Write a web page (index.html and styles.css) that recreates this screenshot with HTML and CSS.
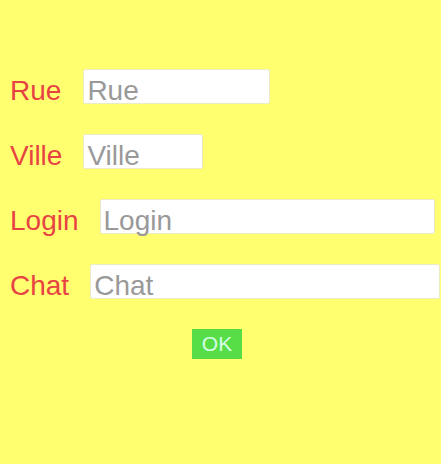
FILE: index.html
```html
<!DOCTYPE html>
<html lang="fr">
<head>
<meta charset="utf-8">
<title>Formulaire</title>
<link rel="stylesheet" href="styles.css">
</head>
<body>
<form class="form">
  <div class="row"><label class="label" for="rue">Rue</label><div class="box box-rue"><input class="field" id="rue" placeholder="Rue"></div></div>
  <div class="row"><label class="label" for="ville">Ville</label><div class="box box-ville"><input class="field" id="ville" placeholder="Ville"></div></div>
  <div class="row"><label class="label" for="login">Login</label><div class="box box-login"><input class="field" id="login" placeholder="Login"></div></div>
  <div class="row"><label class="label" for="chat">Chat</label><div class="box box-chat"><input class="field" id="chat" placeholder="Chat"></div></div>
  <div class="actions"><button class="ok" type="button">OK</button></div>
</form>
</body>
</html>
```
FILE: styles.css
```css
html, body {
  margin: 0;
  padding: 0;
  background: #ffff6f;
  width: 441px;
  height: 464px;
  overflow: hidden;
}
.form {
  display: flex;
  flex-direction: column;
  gap: 30px;
  padding: 69px 0 0 10px;
  font-family: "Liberation Sans", Arial, sans-serif;
}
.row {
  display: flex;
  align-items: center;
  height: 35px;
  gap: 22px;
}
.label {
  font-size: 28px;
  color: #e84343;
  line-height: 35px;
  padding-top: 8px;
}
.box {
  box-sizing: border-box;
  height: 35px;
  border: 1px solid #ecebc8;
  border-radius: 2px;
  background: #fff;
  overflow: visible;
}
.field {
  display: block;
  box-sizing: border-box;
  width: 100%;
  height: 41px;
  margin: 0;
  padding: 0 0 0 3px;
  border: 0;
  background: transparent;
  font-family: "Liberation Sans", Arial, sans-serif;
  font-size: 28px;
  color: #555;
  outline: none;
}
.field::placeholder { color: #999; }
.box-rue { width: 187px; }
.box-ville { width: 120px; margin-left: -1px; }
.box-login { width: 335px; margin-left: -1px; }
.box-chat { width: 350px; margin-left: -1px; flex-shrink: 0; }
.actions {
  display: flex;
  padding-left: 182px;
}
.ok {
  width: 50px;
  height: 30px;
  margin: 0;
  padding: 0;
  border: none;
  border-radius: 0;
  background: #57dd45;
  color: #d4ffe8;
  font-family: "Liberation Sans", Arial, sans-serif;
  font-size: 21px;
  line-height: 30px;
}
```
